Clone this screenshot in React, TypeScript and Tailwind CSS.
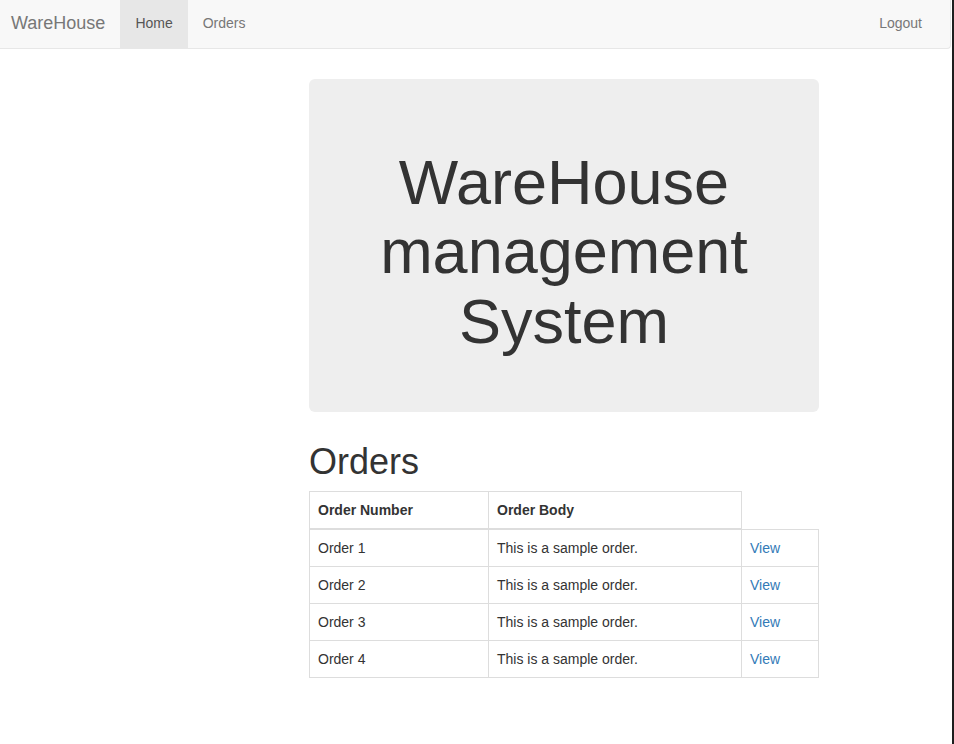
import React from "react";

const orders = [
  { n: "Order 1", b: "This is a sample order." },
  { n: "Order 2", b: "This is a sample order." },
  { n: "Order 3", b: "This is a sample order." },
  { n: "Order 4", b: "This is a sample order." },
];

export default function App() {
  return (
    <div className="flex min-h-screen bg-white font-['Liberation_Sans',Arial,sans-serif] text-[14px] leading-[20px] text-[#333]">
      <div className="w-[952px] shrink-0">
        <nav className="mr-px flex h-[49px] items-stretch rounded-br-[4px] border-b border-r border-[#e7e7e7] bg-[#f8f8f8]">
          <a className="flex h-[48px] items-start pl-[11px] pr-[15px] pt-[13px] text-[18px] leading-[20px] text-[#777]">
            WareHouse
          </a>
          <a className="flex h-[48px] items-start bg-[#e7e7e7] px-[15px] pt-[13px] text-[#555]">Home</a>
          <a className="flex h-[48px] items-start px-[15px] pt-[13px] text-[#777]">Orders</a>
          <div className="flex-1" />
          <a className="mr-[13px] flex h-[48px] items-start px-[15px] pt-[13px] text-[#777]">Logout</a>
        </nav>

        <div className="ml-[309px] w-[510px]">
          <div className="mt-[30px] rounded-[6px] bg-[#eee] px-[60px] pb-[56px] pt-[69px] text-center">
            <h1 className="text-[63px] leading-[69.3px] font-normal text-[#333]">
              WareHouse management System
            </h1>
          </div>

          <h1 className="mb-[10px] mt-[30px] text-[36px] leading-[39.6px] font-normal text-[#333]">Orders</h1>

          <table className="w-[509px] table-fixed border-collapse">
            <colgroup>
              <col className="w-[179px]" />
              <col className="w-[253px]" />
              <col className="w-[77px]" />
            </colgroup>
            <thead>
              <tr>
                <th className="border border-b-2 border-[#ddd] p-[8px] text-left font-bold">Order Number</th>
                <th className="border border-b-2 border-[#ddd] p-[8px] text-left font-bold">Order Body</th>
                <th className="border-0 p-[8px]"></th>
              </tr>
            </thead>
            <tbody>
              {orders.map((o) => (
                <tr key={o.n}>
                  <td className="border border-[#ddd] p-[8px]">{o.n}</td>
                  <td className="border border-[#ddd] p-[8px]">{o.b}</td>
                  <td className="border border-[#ddd] p-[8px]">
                    <a className="text-[#337ab7]">View</a>
                  </td>
                </tr>
              ))}
            </tbody>
          </table>
        </div>
      </div>
      <div className="w-[2px] shrink-0 bg-[#1e1e1e]" />
    </div>
  );
}
